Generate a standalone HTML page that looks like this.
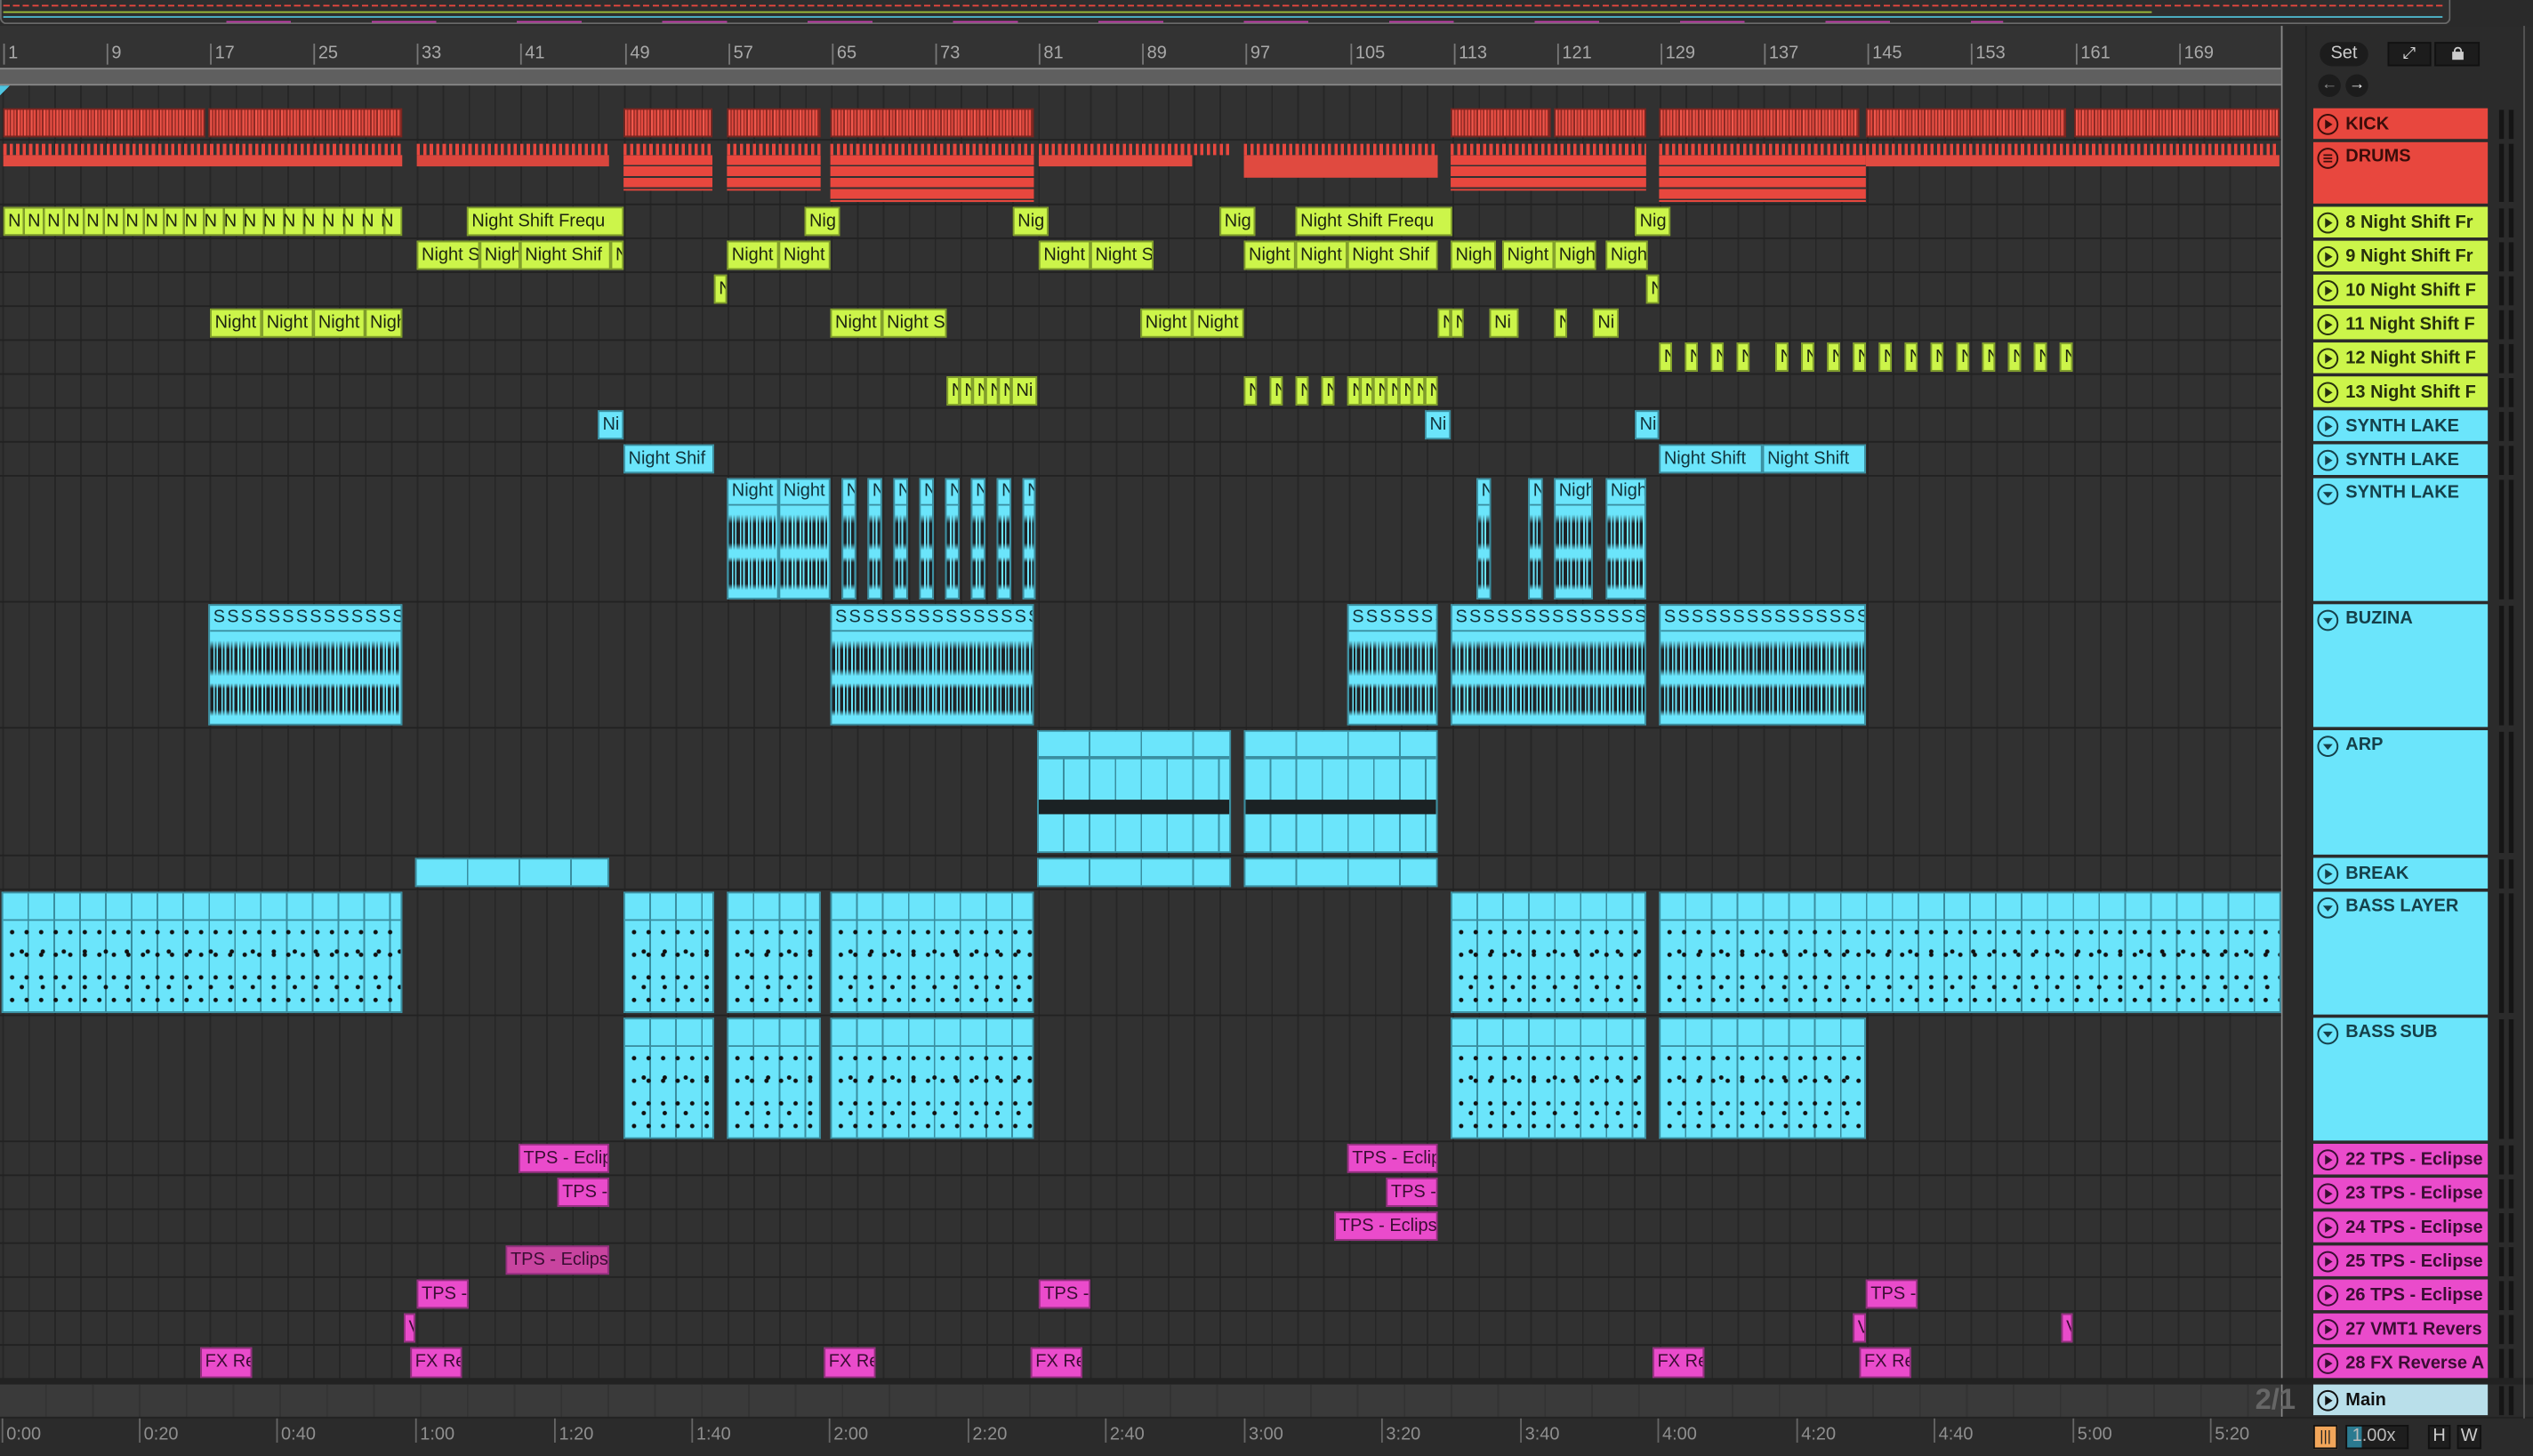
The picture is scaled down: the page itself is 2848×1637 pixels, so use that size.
<!DOCTYPE html><html><head><meta charset="utf-8"><style>
html,body{margin:0;padding:0;background:#2b2b2b;overflow:hidden}
#s{position:absolute;left:0;top:0;width:1568px;height:900px;transform:scale(1.81633);transform-origin:0 0;font-family:"Liberation Sans",sans-serif;background:#2b2b2b}
.a{position:absolute}
#trk{position:absolute;left:0;top:53px;width:1412px;height:804px;background-color:#313131;background-image:repeating-linear-gradient(90deg,transparent 0 1.5px,#262626 1.5px 2.5px,transparent 2.5px 16.03px)}
.row{position:absolute;left:0;width:1412px;border-bottom:1px solid #222;box-sizing:border-box}
.row i{position:absolute;top:1px;bottom:1px;box-sizing:border-box;font-style:normal;font-size:11px;line-height:17px;padding-left:2px;white-space:nowrap;overflow:hidden}
.g i{background:#ccf54a;border:1px solid #7f9c2b;color:#1d2410}
.b i{background:#6be5fb;border:1px solid #3a8ea0;color:#11323a}
.p i{background:#ea4bcb;border:1px solid #93307f;color:#3a0d33}
.bg i{background:#6be5fb;border:1px solid #3a8ea0;color:#11323a;padding:0}
.wv{position:absolute;left:0;right:0;top:16px;bottom:2px;background:repeating-linear-gradient(90deg,#1d2226 0 2px,transparent 2px 3px,#1d2226 3px 4px,transparent 4px 5px);-webkit-mask:linear-gradient(180deg,transparent 0 10%,#000 20% 42%,transparent 50% 58%,#000 64% 88%,transparent 95%)}
.mid{position:absolute;left:0;right:0;top:16px;bottom:0;border-top:1px solid #3a8ea0;background-image:radial-gradient(circle at center,#111 0 1.2px,transparent 1.5px),radial-gradient(circle at center,#111 0 1.2px,transparent 1.5px);background-size:9px 14px,13px 22px;background-position:1px 0,5px 8px}
.hd{display:block;height:15px;line-height:15px;font-size:11px;padding-left:2px;overflow:hidden;border-bottom:1px solid #3a8ea0}
.k i{background:repeating-linear-gradient(90deg,#f0574c 0 1px,#a9342c 1px 2px,#e54a40 2px 3px,#8e2a24 3px 4px);border:1px solid #7a2520}
.hdr{position:absolute;left:1432px;width:108px;box-sizing:border-box;font-weight:bold;font-size:11px;line-height:20px;padding-left:20px;white-space:nowrap;overflow:hidden;font-family:"Liberation Sans",sans-serif}
.hdr svg{position:absolute;left:2px;top:3px}
.mt{position:absolute;left:1547px;width:9px;border-left:3px solid #151515;border-right:3px solid #151515;box-sizing:border-box;width:9px}
.rl{position:absolute;top:27px;font-size:11px;color:#a9a9a9;border-left:1px solid #777;padding-left:2px;height:13px;line-height:13px}
.tl{position:absolute;top:878px;font-size:11px;color:#8f8f8f;border-left:1px solid #666;padding-left:2px;height:15px;line-height:20px}
</style></head><body><div id="s">
<div class="a" style="left:0;top:0;width:1517px;height:15px;background:#2e2e2e;border:1px solid #6a6a6a;border-top:none;border-radius:0 0 4px 4px;box-sizing:border-box"></div>
<div class="a" style="left:2px;top:3px;width:1510px;height:1px;background:repeating-linear-gradient(90deg,#e8473e 0 4px,transparent 4px 6px)"></div>
<div class="a" style="left:2px;top:7px;width:1330px;height:1px;background:#9fbf3a"></div>
<div class="a" style="left:2px;top:10px;width:1510px;height:1px;background:#4fb9cf"></div>
<div class="a" style="left:140px;top:13px;width:1100px;height:1px;background:repeating-linear-gradient(90deg,#c03ca8 0 40px,transparent 40px 90px)"></div>
<div class="a" style="left:1517px;top:0;width:51px;height:16px;background:#2a2a2a;border-right:1px solid #666"></div>
<div class="a" style="left:0;top:16px;width:1430px;height:26px;background:#333"></div>
<div class="rl" style="left:2px">1</div><div class="rl" style="left:66px">9</div><div class="rl" style="left:130px">17</div><div class="rl" style="left:194px">25</div><div class="rl" style="left:258px">33</div><div class="rl" style="left:322px">41</div><div class="rl" style="left:387px">49</div><div class="rl" style="left:451px">57</div><div class="rl" style="left:515px">65</div><div class="rl" style="left:579px">73</div><div class="rl" style="left:643px">81</div><div class="rl" style="left:707px">89</div><div class="rl" style="left:771px">97</div><div class="rl" style="left:836px">105</div><div class="rl" style="left:900px">113</div><div class="rl" style="left:964px">121</div><div class="rl" style="left:1028px">129</div><div class="rl" style="left:1092px">137</div><div class="rl" style="left:1156px">145</div><div class="rl" style="left:1220px">153</div><div class="rl" style="left:1285px">161</div><div class="rl" style="left:1349px">169</div>
<div class="a" style="left:0;top:42px;width:1412px;height:11px;background:#5f5f5f;border-top:1px solid #8a8a8a;border-bottom:1px solid #8a8a8a;box-sizing:border-box"></div>
<div class="a" style="left:1412px;top:16px;width:1px;height:862px;background:#8a8a8a"></div>
<div class="a" style="left:1413px;top:16px;width:155px;height:862px;background:#2b2b2b"></div>
<div class="a" style="left:1427px;top:16px;width:1px;height:840px;background:#222"></div>
<div class="a" style="left:1436px;top:26px;width:30px;height:15px;border-radius:8px;background:#1c1c1c;color:#ccc;font-size:11px;line-height:15px;text-align:center">Set</div>
<div class="a" style="left:1478px;top:26px;width:27px;height:15px;background:#1c1c1c;border:1px solid #111;box-sizing:border-box;color:#ddd;font-size:10px;text-align:center;line-height:13px">⤢</div>
<div class="a" style="left:1507px;top:26px;width:28px;height:15px;background:#1c1c1c;border:1px solid #111;box-sizing:border-box"><div class="a" style="left:10px;top:5px;width:7px;height:5px;background:#ccc"></div><div class="a" style="left:11px;top:2px;width:3px;height:4px;border:1px solid #ccc;border-bottom:none;border-radius:3px 3px 0 0"></div></div>
<div class="a" style="left:1435px;top:46px;width:14px;height:14px;border-radius:7px;background:#1c1c1c;color:#888;font-size:10px;line-height:14px;text-align:center">←</div>
<div class="a" style="left:1452px;top:46px;width:14px;height:14px;border-radius:7px;background:#1c1c1c;color:#eee;font-size:10px;line-height:14px;text-align:center">→</div>

<div id="trk"></div>
<div class="a" style="left:0;top:53px;width:6px;height:6px;background:linear-gradient(135deg,#4ec4e0 50%,transparent 50%)"></div>

<div class="row k" style="top:66px;height:21px"><i style="left:2px;width:125px"></i><i style="left:129px;width:120px"></i><i style="left:386px;width:55px"></i><i style="left:450px;width:58px"></i><i style="left:514px;width:126px"></i><i style="left:898px;width:62px"></i><i style="left:962px;width:57px"></i><i style="left:1027px;width:124px"></i><i style="left:1155px;width:124px"></i><i style="left:1284px;width:127px"></i></div>
<div class="row" style="top:87px;height:40px">
<div class="a" style="left:2px;top:2px;width:247px;height:7px;background:repeating-linear-gradient(90deg,#e8473e 0 2px,transparent 2px 4px)"></div>
<div class="a" style="left:2px;top:9px;width:247px;height:7px;background:#e04a40"></div>
<div class="a" style="left:258px;top:2px;width:119px;height:7px;background:repeating-linear-gradient(90deg,#e8473e 0 2px,transparent 2px 4px)"></div>
<div class="a" style="left:258px;top:9px;width:119px;height:7px;background:#d9463d"></div>
<div class="a" style="left:386px;top:2px;width:55px;height:7px;background:repeating-linear-gradient(90deg,#e8473e 0 2px,transparent 2px 4px)"></div>
<div class="a" style="left:386px;top:9px;width:55px;height:22px;background:repeating-linear-gradient(180deg,#e8473e 0 6px,#313131 6px 7px)"></div>
<div class="a" style="left:450px;top:2px;width:58px;height:7px;background:repeating-linear-gradient(90deg,#e8473e 0 2px,transparent 2px 4px)"></div>
<div class="a" style="left:450px;top:9px;width:58px;height:22px;background:repeating-linear-gradient(180deg,#e8473e 0 6px,#313131 6px 7px)"></div>
<div class="a" style="left:514px;top:2px;width:126px;height:7px;background:repeating-linear-gradient(90deg,#e8473e 0 2px,transparent 2px 4px)"></div>
<div class="a" style="left:514px;top:9px;width:126px;height:29px;background:repeating-linear-gradient(180deg,#e8473e 0 6px,#313131 6px 7px)"></div>
<div class="a" style="left:643px;top:2px;width:120px;height:7px;background:repeating-linear-gradient(90deg,#e8473e 0 2px,transparent 2px 4px)"></div>
<div class="a" style="left:643px;top:9px;width:95px;height:7px;background:#e04a40"></div>
<div class="a" style="left:770px;top:2px;width:120px;height:7px;background:repeating-linear-gradient(90deg,#e8473e 0 2px,transparent 2px 4px)"></div>
<div class="a" style="left:770px;top:9px;width:120px;height:14px;background:#e04a40"></div>
<div class="a" style="left:898px;top:2px;width:121px;height:7px;background:repeating-linear-gradient(90deg,#e8473e 0 2px,transparent 2px 4px)"></div>
<div class="a" style="left:898px;top:9px;width:121px;height:22px;background:repeating-linear-gradient(180deg,#e8473e 0 6px,#313131 6px 7px)"></div>
<div class="a" style="left:1027px;top:2px;width:128px;height:7px;background:repeating-linear-gradient(90deg,#e8473e 0 2px,transparent 2px 4px)"></div>
<div class="a" style="left:1027px;top:9px;width:128px;height:29px;background:repeating-linear-gradient(180deg,#e8473e 0 6px,#313131 6px 7px)"></div>
<div class="a" style="left:1155px;top:2px;width:256px;height:7px;background:repeating-linear-gradient(90deg,#e8473e 0 2px,transparent 2px 4px)"></div>
<div class="a" style="left:1155px;top:9px;width:256px;height:7px;background:#e04a40"></div>
</div>
<div class="row g" style="top:127px;height:21px">
<i style="left:2px;width:247px;background:repeating-linear-gradient(90deg,#ccf54a 0 11px,#7f9c2b 11px 12.4px);letter-spacing:4.2px">NNNNNNNNNNNNNNNNNNNN</i>
<i style="left:289px;width:97px">Night Shift Frequ</i><i style="left:498px;width:22px">Nig</i><i style="left:627px;width:22px">Nig</i><i style="left:755px;width:22px">Nig</i><i style="left:802px;width:97px">Night Shift Frequ</i><i style="left:1012px;width:22px">Nig</i></div>
<div class="row g" style="top:148px;height:21px"><i style="left:258px;width:39px">Night S</i><i style="left:297px;width:25px">Nigh</i><i style="left:322px;width:56px">Night Shif</i><i style="left:378px;width:8px">N</i><i style="left:450px;width:32px">Night</i><i style="left:482px;width:32px">Night</i><i style="left:643px;width:32px">Night</i><i style="left:675px;width:39px">Night S</i><i style="left:770px;width:32px">Night</i><i style="left:802px;width:32px">Night</i><i style="left:834px;width:56px">Night Shif</i><i style="left:898px;width:28px">Nigh</i><i style="left:930px;width:32px">Night</i><i style="left:962px;width:26px">Nigh</i><i style="left:994px;width:26px">Nigh</i></div>
<div class="row g" style="top:169px;height:21px"><i style="left:442px;width:8px">N</i><i style="left:1019px;width:8px">N</i></div>
<div class="row g" style="top:190px;height:21px"><i style="left:130px;width:32px">Night</i><i style="left:162px;width:32px">Night</i><i style="left:194px;width:32px">Night</i><i style="left:226px;width:23px">Nigh</i><i style="left:514px;width:32px">Night</i><i style="left:546px;width:40px">Night S</i><i style="left:706px;width:32px">Night</i><i style="left:738px;width:32px">Night</i><i style="left:890px;width:8px">N</i><i style="left:898px;width:8px">N</i><i style="left:922px;width:18px">Ni</i><i style="left:962px;width:8px">N</i><i style="left:986px;width:16px">Ni</i></div>
<div class="row g" style="top:211px;height:21px"><i style="left:1027px;width:8px">N</i><i style="left:1043px;width:8px">N</i><i style="left:1059px;width:8px">N</i><i style="left:1075px;width:8px">N</i><i style="left:1099px;width:8px">N</i><i style="left:1115px;width:8px">N</i><i style="left:1131px;width:8px">N</i><i style="left:1147px;width:8px">N</i><i style="left:1163px;width:8px">N</i><i style="left:1179px;width:8px">N</i><i style="left:1195px;width:8px">N</i><i style="left:1211px;width:8px">N</i><i style="left:1227px;width:8px">N</i><i style="left:1243px;width:8px">N</i><i style="left:1259px;width:8px">N</i><i style="left:1275px;width:8px">N</i></div>
<div class="row g" style="top:232px;height:21px"><i style="left:586px;width:8px">N</i><i style="left:594px;width:8px">N</i><i style="left:602px;width:8px">N</i><i style="left:610px;width:8px">N</i><i style="left:618px;width:8px">N</i><i style="left:626px;width:16px">Ni</i><i style="left:770px;width:8px">N</i><i style="left:786px;width:8px">N</i><i style="left:802px;width:8px">N</i><i style="left:818px;width:8px">N</i><i style="left:834px;width:8px">N</i><i style="left:842px;width:8px">N</i><i style="left:850px;width:8px">N</i><i style="left:858px;width:8px">N</i><i style="left:866px;width:8px">N</i><i style="left:874px;width:8px">N</i><i style="left:882px;width:8px">N</i></div>
<div class="row b" style="top:253px;height:21px"><i style="left:370px;width:16px">Ni</i><i style="left:882px;width:16px">Ni</i><i style="left:1012px;width:15px">Ni</i></div>
<div class="row b" style="top:274px;height:21px"><i style="left:386px;width:56px">Night Shif</i><i style="left:1027px;width:64px">Night Shift</i><i style="left:1091px;width:64px">Night Shift</i></div>
<div class="row bg" style="top:295px;height:78px">
<i style="left:450px;width:32px"><span class="hd">Night</span><span class="wv"></span></i><i style="left:482px;width:32px"><span class="hd">Night</span><span class="wv"></span></i>
<i style="left:521px;width:9px"><span class="hd">N</span><span class="wv"></span></i><i style="left:537px;width:9px"><span class="hd">N</span><span class="wv"></span></i><i style="left:553px;width:9px"><span class="hd">N</span><span class="wv"></span></i><i style="left:569px;width:9px"><span class="hd">N</span><span class="wv"></span></i><i style="left:585px;width:9px"><span class="hd">N</span><span class="wv"></span></i><i style="left:601px;width:9px"><span class="hd">N</span><span class="wv"></span></i><i style="left:617px;width:9px"><span class="hd">N</span><span class="wv"></span></i><i style="left:633px;width:8px"><span class="hd">N</span><span class="wv"></span></i>
<i style="left:914px;width:9px"><span class="hd">N</span><span class="wv"></span></i><i style="left:946px;width:9px"><span class="hd">N</span><span class="wv"></span></i><i style="left:962px;width:24px"><span class="hd">Nigh</span><span class="wv"></span></i><i style="left:994px;width:25px"><span class="hd">Nigh</span><span class="wv"></span></i></div>
<div class="row bg" style="top:373px;height:78px">
<i style="left:129px;width:120px"><span class="hd" style="letter-spacing:1.2px">SSSSSSSSSSSSSSSS</span><span class="wv"></span></i>
<i style="left:514px;width:126px"><span class="hd" style="letter-spacing:1.2px">SSSSSSSSSSSSSSSS</span><span class="wv"></span></i>
<i style="left:834px;width:56px"><span class="hd" style="letter-spacing:1.2px">SSSSSSS</span><span class="wv"></span></i>
<i style="left:898px;width:121px"><span class="hd" style="letter-spacing:1.2px">SSSSSSSSSSSSSSSS</span><span class="wv"></span></i>
<i style="left:1027px;width:128px"><span class="hd" style="letter-spacing:1.2px">SSSSSSSSSSSSSSSS</span><span class="wv"></span></i></div>
<div class="row bg" style="top:451px;height:79px">
<i style="left:642px;width:120px;background-image:repeating-linear-gradient(90deg,transparent 0 15px,#3a8ea0 15px 16px)"><span class="hd" style="border-bottom-width:2px;background:repeating-linear-gradient(90deg,#6be5fb 0 31px,#3a8ea0 31px 32px)"></span><span class="a" style="left:0;right:0;top:42px;height:9px;background:#1b2224"></span></i>
<i style="left:770px;width:120px;background-image:repeating-linear-gradient(90deg,transparent 0 15px,#3a8ea0 15px 16px)"><span class="hd" style="border-bottom-width:2px;background:repeating-linear-gradient(90deg,#6be5fb 0 31px,#3a8ea0 31px 32px)"></span><span class="a" style="left:0;right:0;top:42px;height:9px;background:#1b2224"></span></i></div>
<div class="row b" style="top:530px;height:21px"><i style="left:257px;width:120px;background-image:repeating-linear-gradient(90deg,#6be5fb 0 31px,#3a8ea0 31px 32px)"></i><i style="left:642px;width:120px;background-image:repeating-linear-gradient(90deg,#6be5fb 0 31px,#3a8ea0 31px 32px)"></i><i style="left:770px;width:120px;background-image:repeating-linear-gradient(90deg,#6be5fb 0 31px,#3a8ea0 31px 32px)"></i></div>
<div class="row bg" style="top:551px;height:78px">
<i style="left:1px;width:248px;background-image:repeating-linear-gradient(90deg,transparent 0 15px,#3a8ea0 15px 16px)"><span class="mid"></span></i>
<i style="left:386px;width:56px;background-image:repeating-linear-gradient(90deg,transparent 0 15px,#3a8ea0 15px 16px)"><span class="mid"></span></i>
<i style="left:450px;width:58px;background-image:repeating-linear-gradient(90deg,transparent 0 15px,#3a8ea0 15px 16px)"><span class="mid"></span></i>
<i style="left:514px;width:126px;background-image:repeating-linear-gradient(90deg,transparent 0 15px,#3a8ea0 15px 16px)"><span class="mid"></span></i>
<i style="left:898px;width:121px;background-image:repeating-linear-gradient(90deg,transparent 0 15px,#3a8ea0 15px 16px)"><span class="mid"></span></i>
<i style="left:1027px;width:385px;background-image:repeating-linear-gradient(90deg,transparent 0 15px,#3a8ea0 15px 16px)"><span class="mid"></span></i></div>
<div class="row bg" style="top:629px;height:78px">
<i style="left:386px;width:56px;background-image:repeating-linear-gradient(90deg,transparent 0 15px,#3a8ea0 15px 16px)"><span class="mid"></span></i>
<i style="left:450px;width:58px;background-image:repeating-linear-gradient(90deg,transparent 0 15px,#3a8ea0 15px 16px)"><span class="mid"></span></i>
<i style="left:514px;width:126px;background-image:repeating-linear-gradient(90deg,transparent 0 15px,#3a8ea0 15px 16px)"><span class="mid"></span></i>
<i style="left:898px;width:121px;background-image:repeating-linear-gradient(90deg,transparent 0 15px,#3a8ea0 15px 16px)"><span class="mid"></span></i>
<i style="left:1027px;width:128px;background-image:repeating-linear-gradient(90deg,transparent 0 15px,#3a8ea0 15px 16px)"><span class="mid"></span></i></div>
<div class="row p" style="top:707px;height:21px"><i style="left:321px;width:56px">TPS - Eclip</i><i style="left:834px;width:56px">TPS - Eclip</i></div>
<div class="row p" style="top:728px;height:21px"><i style="left:345px;width:32px">TPS -</i><i style="left:858px;width:32px">TPS -</i></div>
<div class="row p" style="top:749px;height:21px"><i style="left:826px;width:64px">TPS - Eclips</i></div>
<div class="row p" style="top:770px;height:21px"><i style="left:313px;width:64px;background:#c8449f">TPS - Eclips</i></div>
<div class="row p" style="top:791px;height:21px"><i style="left:258px;width:32px">TPS -</i><i style="left:643px;width:32px">TPS -</i><i style="left:1155px;width:32px">TPS -</i></div>
<div class="row p" style="top:812px;height:21px"><i style="left:250px;width:7px">V</i><i style="left:1147px;width:8px">V</i><i style="left:1276px;width:7px">V</i></div>
<div class="row p" style="top:833px;height:21px;border-bottom:none"><i style="left:124px;width:32px">FX Re</i><i style="left:254px;width:32px">FX Re</i><i style="left:510px;width:32px">FX Re</i><i style="left:638px;width:32px">FX Re</i><i style="left:1023px;width:32px">FX Re</i><i style="left:1151px;width:32px">FX Re</i></div>
<div class="a" style="left:0;top:853px;width:1568px;height:4px;background:#222"></div>
<div class="a" style="left:0;top:857px;width:1412px;height:20px;background-color:#3a3a3a;background-image:repeating-linear-gradient(90deg,transparent 0 28px,#333 28px 29px)"></div>
<div class="a" style="left:1396px;top:855px;font-size:18px;font-weight:bold;color:#666;line-height:22px">2/1</div>
<div class="a" style="left:0;top:877px;width:1568px;height:23px;background:#2b2b2b;border-top:1px solid #222"></div>
<div class="tl" style="left:1px">0:00</div><div class="tl" style="left:86px">0:20</div><div class="tl" style="left:171px">0:40</div><div class="tl" style="left:257px">1:00</div><div class="tl" style="left:343px">1:20</div><div class="tl" style="left:428px">1:40</div><div class="tl" style="left:513px">2:00</div><div class="tl" style="left:599px">2:20</div><div class="tl" style="left:684px">2:40</div><div class="tl" style="left:770px">3:00</div><div class="tl" style="left:855px">3:20</div><div class="tl" style="left:941px">3:40</div><div class="tl" style="left:1026px">4:00</div><div class="tl" style="left:1112px">4:20</div><div class="tl" style="left:1197px">4:40</div><div class="tl" style="left:1283px">5:00</div><div class="tl" style="left:1368px">5:20</div>
<div class="a" style="left:1432px;top:882px;width:15px;height:15px;background:#f2a65a;border:1px solid #111;box-sizing:border-box;color:#222;font-size:9px;text-align:center;line-height:13px">|||</div>
<div class="a" style="left:1452px;top:882px;width:39px;height:15px;background:#1e1e1e;border:1px solid #111;box-sizing:border-box;color:#bbb;font-size:11px;line-height:13px;padding-left:3px"><span class="a" style="left:0;top:0;width:9px;height:13px;background:#2b7a90"></span><span style="position:relative">1.00x</span></div>
<div class="a" style="left:1503px;top:882px;width:14px;height:15px;background:#1e1e1e;border:1px solid #111;box-sizing:border-box;color:#ccc;font-size:11px;text-align:center;line-height:13px">H</div>
<div class="a" style="left:1521px;top:882px;width:15px;height:15px;background:#1e1e1e;border:1px solid #111;box-sizing:border-box;color:#ccc;font-size:11px;text-align:center;line-height:13px">W</div>

<svg width="0" height="0" style="position:absolute"><defs><symbol id="pl" viewBox="0 0 14 14"><circle cx="7" cy="7" r="6" fill="none" stroke="currentColor" stroke-width="1.1"/><path d="M5.3 4v6l4.6-3z" fill="currentColor"/></symbol><symbol id="dn" viewBox="0 0 14 14"><circle cx="7" cy="7" r="6" fill="none" stroke="currentColor" stroke-width="1.1"/><path d="M4 5.6h6l-3 3.6z" fill="currentColor"/></symbol><symbol id="ls" viewBox="0 0 14 14"><circle cx="7" cy="7" r="6" fill="none" stroke="currentColor" stroke-width="1.1"/><path d="M4.3 5h5.4M4.3 7h5.4M4.3 9h5.4" stroke="currentColor" stroke-width="1"/></symbol></defs></svg>
<div class="hdr" style="top:67px;height:19px;background:#e8473e;color:#3a0d0a"><svg width="14" height="14"><use href="#pl"/></svg>KICK</div>
<div class="hdr" style="top:88px;height:38px;background:#e8473e;color:#3a0d0a;line-height:19px"><svg width="14" height="14"><use href="#ls"/></svg>DRUMS</div>
<div class="hdr" style="top:128px;height:19px;background:#ccf54a;color:#26300d"><svg width="14" height="14"><use href="#pl"/></svg>8 Night Shift Fr</div>
<div class="hdr" style="top:149px;height:19px;background:#ccf54a;color:#26300d"><svg width="14" height="14"><use href="#pl"/></svg>9 Night Shift Fr</div>
<div class="hdr" style="top:170px;height:19px;background:#ccf54a;color:#26300d"><svg width="14" height="14"><use href="#pl"/></svg>10 Night Shift F</div>
<div class="hdr" style="top:191px;height:19px;background:#ccf54a;color:#26300d"><svg width="14" height="14"><use href="#pl"/></svg>11 Night Shift F</div>
<div class="hdr" style="top:212px;height:19px;background:#ccf54a;color:#26300d"><svg width="14" height="14"><use href="#pl"/></svg>12 Night Shift F</div>
<div class="hdr" style="top:233px;height:19px;background:#ccf54a;color:#26300d"><svg width="14" height="14"><use href="#pl"/></svg>13 Night Shift F</div>
<div class="hdr" style="top:254px;height:19px;background:#6be5fb;color:#15404a"><svg width="14" height="14"><use href="#pl"/></svg>SYNTH LAKE</div>
<div class="hdr" style="top:275px;height:19px;background:#6be5fb;color:#15404a"><svg width="14" height="14"><use href="#pl"/></svg>SYNTH LAKE</div>
<div class="hdr" style="top:296px;height:76px;background:#6be5fb;color:#15404a;line-height:19px"><svg width="14" height="14"><use href="#dn"/></svg>SYNTH LAKE</div>
<div class="hdr" style="top:374px;height:76px;background:#6be5fb;color:#15404a;line-height:19px"><svg width="14" height="14"><use href="#dn"/></svg>BUZINA</div>
<div class="hdr" style="top:452px;height:77px;background:#6be5fb;color:#15404a;line-height:19px"><svg width="14" height="14"><use href="#dn"/></svg>ARP</div>
<div class="hdr" style="top:531px;height:19px;background:#6be5fb;color:#15404a"><svg width="14" height="14"><use href="#pl"/></svg>BREAK</div>
<div class="hdr" style="top:552px;height:76px;background:#6be5fb;color:#15404a;line-height:19px"><svg width="14" height="14"><use href="#dn"/></svg>BASS LAYER</div>
<div class="hdr" style="top:630px;height:76px;background:#6be5fb;color:#15404a;line-height:19px"><svg width="14" height="14"><use href="#dn"/></svg>BASS SUB</div>
<div class="hdr" style="top:708px;height:19px;background:#ea4bcb;color:#3a0d33"><svg width="14" height="14"><use href="#pl"/></svg>22 TPS - Eclipse</div>
<div class="hdr" style="top:729px;height:19px;background:#ea4bcb;color:#3a0d33"><svg width="14" height="14"><use href="#pl"/></svg>23 TPS - Eclipse</div>
<div class="hdr" style="top:750px;height:19px;background:#ea4bcb;color:#3a0d33"><svg width="14" height="14"><use href="#pl"/></svg>24 TPS - Eclipse</div>
<div class="hdr" style="top:771px;height:19px;background:#ea4bcb;color:#3a0d33"><svg width="14" height="14"><use href="#pl"/></svg>25 TPS - Eclipse</div>
<div class="hdr" style="top:792px;height:19px;background:#ea4bcb;color:#3a0d33"><svg width="14" height="14"><use href="#pl"/></svg>26 TPS - Eclipse</div>
<div class="hdr" style="top:813px;height:19px;background:#ea4bcb;color:#3a0d33"><svg width="14" height="14"><use href="#pl"/></svg>27 VMT1 Revers</div>
<div class="hdr" style="top:834px;height:19px;background:#ea4bcb;color:#3a0d33"><svg width="14" height="14"><use href="#pl"/></svg>28 FX Reverse A</div>
<div class="hdr" style="top:857px;height:19px;background:#b9dfea;color:#111"><svg width="14" height="14"><use href="#pl"/></svg>Main</div>
<div class="mt" style="top:68px;height:18px"></div><div class="mt" style="top:89px;height:36px"></div>
<div class="mt" style="top:129px;height:18px"></div><div class="mt" style="top:150px;height:18px"></div><div class="mt" style="top:171px;height:18px"></div><div class="mt" style="top:192px;height:18px"></div><div class="mt" style="top:213px;height:18px"></div><div class="mt" style="top:234px;height:18px"></div><div class="mt" style="top:255px;height:18px"></div><div class="mt" style="top:276px;height:18px"></div>
<div class="mt" style="top:297px;height:74px"></div><div class="mt" style="top:375px;height:74px"></div><div class="mt" style="top:453px;height:75px"></div><div class="mt" style="top:532px;height:18px"></div><div class="mt" style="top:553px;height:74px"></div><div class="mt" style="top:631px;height:74px"></div>
<div class="mt" style="top:709px;height:18px"></div><div class="mt" style="top:730px;height:18px"></div><div class="mt" style="top:751px;height:18px"></div><div class="mt" style="top:772px;height:18px"></div><div class="mt" style="top:793px;height:18px"></div><div class="mt" style="top:814px;height:18px"></div><div class="mt" style="top:835px;height:18px"></div><div class="mt" style="top:858px;height:18px"></div>
<div class="a" style="left:1562px;top:16px;width:1px;height:862px;background:#555"></div>
</div></body></html>
